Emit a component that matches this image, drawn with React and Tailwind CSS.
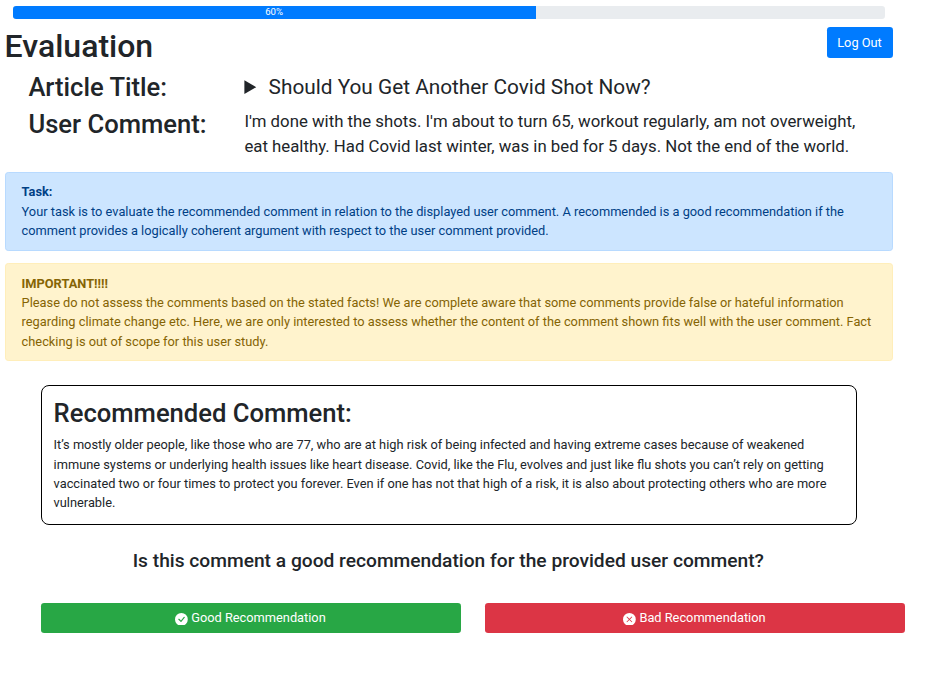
import React from "react";
import { BsCheckCircleFill, BsXCircleFill } from "react-icons/bs";

function ProgressBar() {
  return (
    <div className="ml-[13px] mt-[6px] flex h-[12.8px] w-[872px] overflow-hidden rounded-[3.2px] bg-[#e9ecef] text-[9.6px] leading-[14.4px]">
      <div className="flex w-[60%] flex-col justify-center bg-[#007bff] pr-px text-center text-white">60%</div>
    </div>
  );
}

function Alert({ title, tone, children }) {
  return (
    <div className={`mb-[12.8px] rounded-[3.2px] border pl-[15.6px] pr-4 py-[9.6px] ${tone}`}>
      <b className="block font-bold">{title}</b>
      {children}
    </div>
  );
}

export default function App() {
  return (
    <div className="flow-root min-h-[673px] w-[929px] bg-white font-[Roboto,sans-serif] text-[12.8px] leading-[19.2px] text-[#212529]">
      <ProgressBar />

      <div className="ml-[5px] mt-[8px] w-[888px]">
        <div className="flex items-start justify-between">
          <h1 className="-ml-[0.4px] mb-[6.4px] text-[32px] font-medium leading-[38.4px]">Evaluation</h1>
          <button className="h-[31px] w-[66px] rounded-[3.2px] bg-[#007bff] pr-px text-white">Log Out</button>
        </div>

        <div className="grid grid-cols-[216px_1fr] pl-[23.4px]">
          <h2 className="mb-[6.4px] text-[25.6px] font-medium leading-[30.7px]">Article Title:</h2>
          <details className="text-[20.8px] leading-[31.2px]">
            <summary>
              <span className="pl-[2.2px]">Should You Get Another Covid Shot Now?</span>
            </summary>
          </details>
          <h2 className="text-[25.6px] font-medium leading-[30.7px]">User Comment:</h2>
          <p className="mb-[12.8px] text-[16.8px] leading-[25.2px]">
            I'm done with the shots. I'm about to turn 65, workout regularly, am not overweight,
            <br />
            eat healthy. Had Covid last winter, was in bed for 5 days. Not the end of the world.
          </p>
        </div>

        <Alert title="Task:" tone="border-[#b8daff] bg-[#cce5ff] text-[#004085]">
          Your task is to evaluate the recommended comment in relation to the displayed user comment. A recommended is a
          good recommendation if the comment provides a logically coherent argument with respect to the user comment
          provided.
        </Alert>
        <Alert title="IMPORTANT!!!!" tone="border-[#ffeeba] bg-[#fff3cd] text-[#856404]">
          Please do not assess the comments based on the stated facts! We are complete aware that some comments provide
          false or hateful information regarding climate change etc. Here, we are only interested to assess whether the
          content of the comment shown fits well with the user comment. Fact checking is out of scope for this user
          study.
        </Alert>
      </div>

      <section className="ml-[41px] mt-[23.8px] w-[816px] rounded-[8px] border border-black py-[12px] pl-[11.6px] pr-[12px]">
        <h2 className="mb-[6.4px] text-[25.6px] font-medium leading-[30.7px]">Recommended Comment:</h2>
        <p>
          It’s mostly older people, like those who are 77, who are at high risk of being infected and having extreme
          cases because of weakened immune systems or underlying health issues like heart disease. Covid, like the Flu,
          evolves and just like flu shots you can’t rely on getting vaccinated two or four times to protect you forever.
          Even if one has not that high of a risk, it is also about protecting others who are more vulnerable.
        </p>
      </section>

      <h4 className="ml-[41px] mt-[24px] w-[814.6px] text-center text-[19.2px] font-medium leading-[23px]">
        Is this comment a good recommendation for the provided user comment?
      </h4>

      <div className="ml-[41px] mt-[31px] grid w-[864px] grid-cols-2 gap-6 text-white">
        <button className="h-[30px] rounded-[3.2px] bg-[#28a745] pb-[1.6px] pr-px">
          <BsCheckCircleFill className="inline align-[-3.6px]" size={12.8} /> Good Recommendation
        </button>
        <button className="h-[30px] rounded-[3.2px] bg-[#dc3545] pb-[1.6px] pr-px">
          <BsXCircleFill className="inline align-[-3.6px]" size={12.8} /> Bad Recommendation
        </button>
      </div>
    </div>
  );
}
